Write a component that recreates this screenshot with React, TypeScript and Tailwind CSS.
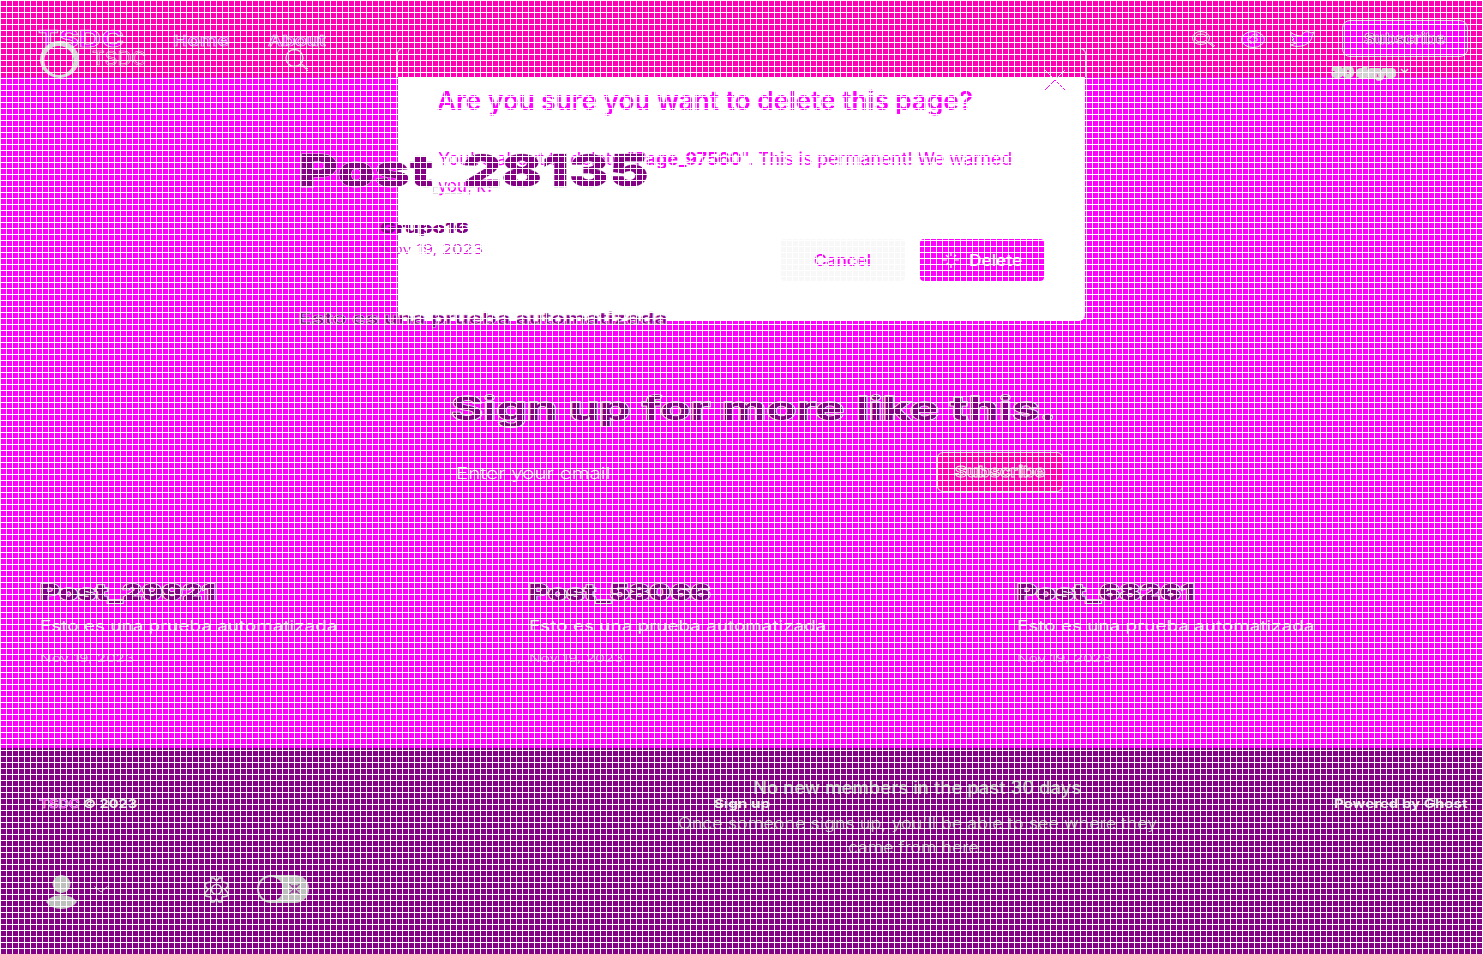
import React, { useLayoutEffect, useRef } from "react";
import { clsx } from "clsx";

/* Text stretched horizontally so that it fills the width of its box. */
function Fit({ className, children }: { className: string; children: React.ReactNode }) {
  const box = useRef<HTMLDivElement>(null);
  const text = useRef<HTMLSpanElement>(null);
  useLayoutEffect(() => {
    if (box.current && text.current) {
      text.current.style.transform = `scaleX(${box.current.clientWidth / text.current.offsetWidth})`;
    }
  }, []);
  return (
    <div ref={box} className={clsx("shrink-0 whitespace-nowrap text-left", className)}>
      <span ref={text} className="inline-block origin-left">{children}</span>
    </div>
  );
}

const outline = "[-webkit-text-stroke:0.7px_#dedede]";
const heavyOutline = "[-webkit-text-stroke:1.6px_#dedede] [paint-order:stroke_fill]";

const posts = [
  { title: "Post_29921", date: "Nov 19, 2023", width: "w-[176px]" },
  { title: "Post_58066", date: "Nov 19, 2023", width: "w-[181px]" },
  { title: "Post_68261", date: "Nov 19, 2023", width: "w-[177px]" },
];

function Modal() {
  return (
    <div className="[grid-area:1/1] pl-[397px] pt-[48px]">
      <div className="flex h-[273px] w-[689px] flex-col text-[#ff00ff]">
        <div className="h-[29px] rounded-t-md border border-b-0 border-[#dcdcdc]" />
        <div className="mx-px flex grow flex-col rounded-b-md bg-white">
          <div className="-mt-[28px] flex h-[72px] items-start pl-[39px] pt-[21px]">
            <Fit className="mt-[15px] h-8 w-[536px] text-[26px] font-semibold leading-8">
              Are you sure you want to delete this page?
            </Fit>
            <svg className="ml-[72px] h-5 w-5 shrink-0" viewBox="0 0 20 20" fill="none" strokeWidth="1">
              <path d="M0 0L9 9M20 0L11 9" stroke="#e0e0e0" />
              <path d="M0 20L10 10L20 20" stroke="#ff00ff" />
            </svg>
          </div>
          <div className="flex flex-col pl-[40px] pt-[25px] leading-[27px]">
            <Fit className="h-[27px] w-[574px] text-[17px]">
              You're about to delete "<b className="font-bold">Page_97560</b>". This is permanent! We warned
            </Fit>
            <Fit className="h-[27px] w-[56px] text-[17px]">you, k?</Fit>
          </div>
          <div className="ml-auto mr-[41px] mt-[39px] flex gap-[15px] text-[16px] font-medium">
            <button className="flex h-[42px] w-[124px] items-center justify-center rounded bg-[#f8f8f8]">
              <Fit className="mr-[2px] w-[57px]">Cancel</Fit>
            </button>
            <button className="flex h-[42px] w-[124px] items-center rounded bg-[#ff00ff] pl-[22px] text-white">
              <svg className="mr-[9px] h-[18px] w-[18px]" viewBox="0 0 18 18" stroke="white" strokeWidth="1.2">
                <path d="M9 1v4M9 13v4M1 9h4M13 9h4M4 4l2 2M12 12l2 2M14 4l-2 2M4 14l2-2" />
              </svg>
              <Fit className="w-[53px]">Delete</Fit>
            </button>
          </div>
        </div>
      </div>
    </div>
  );
}

function Page() {
  return (
    <div className="z-10 flex flex-col text-[#850085] [grid-area:1/1]">
      <header className="flex h-[78px] items-start pl-[38px]">
        <Fit className={clsx("mt-[27px] w-[86px] text-[23px] font-bold leading-[25px] text-[#ff00ff]", outline)}>TSDC</Fit>
        <Fit className={clsx("ml-[49px] mt-[30px] w-[57px] text-[15px] font-semibold leading-[21px] text-[#ff00ff]", outline)}>Home</Fit>
        <Fit className={clsx("ml-[38px] mt-[30px] w-[58px] text-[15px] font-semibold leading-[21px] text-[#ff00ff]", outline)}>About</Fit>
        <div className="ml-auto mr-[15px] mt-[20px] flex">
          <div className="flex h-[38px] items-center">
            <svg className="mr-[25px] h-[18px] w-[24px]" viewBox="0 0 24 18" fill="none" stroke="#dedede">
              <ellipse cx="9" cy="8" rx="8.500" ry="6.500" /><ellipse cx="9" cy="8" rx="6" ry="4" />
              <path d="M15 12l7 5M17 12l6 4" />
            </svg>
            <svg className="mr-[24px] h-[18px] w-[25px]" viewBox="0 0 25 18" fill="#ff00ff" stroke="#dedede">
              <ellipse cx="12" cy="9.500" rx="11.500" ry="8" />
              <path fill="none" d="M10 14V11H7V8h3C10 5 12 4 16 4v2c-3 0-3 1-3 2h3v3h-3v3" />
            </svg>
            <svg className="mr-[27px] h-[16px] w-[25px]" viewBox="0 0 25 16" fill="#ff00ff" stroke="#dedede">
              <path d="M1 1.500C4 4 8 5 12 5C12 1 18-.5 21 2L24 1L22 5C22 13 10 18 1 14L6 12L2 9L4 8L1 5Z" />
            </svg>
          </div>
          <button className="flex h-[37px] w-[126px] items-center justify-center rounded-lg border border-[#dedede] bg-[#ff00ff]">
            <Fit className={clsx("w-[82px] text-[15px] font-bold leading-5 text-[#b000b0]", outline)}>Subscribe</Fit>
          </button>
        </div>
      </header>

      <article className="h-[300px] pl-[299px] pt-[67px]">
        <Fit className="h-[50px] w-[350px] text-[46px] font-black leading-[50px] [-webkit-text-stroke:0.8px_#d8d0d8] [paint-order:stroke_fill]">
          Post<span className="text-[#ffffff00]">_</span>28135
        </Fit>
        <div className="ml-[81px] mt-[23px] flex flex-col">
          <Fit className="h-5 w-[89px] text-[14px] font-black leading-5">Grupo16</Fit>
          <Fit className="mt-px h-5 w-[103px] text-[13px] font-light leading-5 text-[#d400d4]">Nov 19, 2023</Fit>
        </div>
        <Fit className="-ml-px mt-[49px] h-5 w-[369px] text-[16px] font-bold leading-5 text-[#900090] [-webkit-text-stroke:0.5px_#d6c6d6]">
          Esto es una prueba automatizada
        </Fit>
      </article>

      <section className="h-[182px] pt-[11px]">
        <Fit className={clsx("ml-[451px] h-[40px] w-[605px] text-[32px] font-bold leading-[40px]", heavyOutline)}>
          Sign up for more like this.
        </Fit>
        <div className="ml-[456px] mt-[23px] flex h-[40px] items-center">
          <Fit className="mt-px w-[154px] text-[16px] font-light leading-5 text-[#ececec]">Enter your email</Fit>
          <button className="ml-[327px] flex h-[40px] w-[126px] items-center justify-center rounded-md border border-[#dedede] bg-[#ff00b4]">
            <Fit className="w-[91px] text-[15px] font-bold leading-5 text-[#ff00b4] [-webkit-text-stroke:0.9px_#dedede]">Subscribe</Fit>
          </button>
        </div>
      </section>

      <section className="flex h-[189px] pl-[40px] pt-[17px]">
        {posts.map((p) => (
          <div key={p.title} className="w-[488.500px] shrink-0">
            <Fit className={clsx("h-[30px] text-[22px] font-black leading-[30px]", heavyOutline, p.width)}>{p.title}</Fit>
            <Fit className="mt-[9px] h-5 w-[297px] text-[14px] leading-5 text-[#e6e6e6]">Esto es una prueba automatizada</Fit>
            <Fit className="mt-[12px] h-5 w-[95px] text-[10px] font-light leading-5 text-[#e2b9e2]">{p.date}</Fit>
          </div>
        ))}
      </section>

      <footer className="flex h-[205px] pl-[39px] pt-[45px] text-[12px] font-bold leading-5 text-[#e6e6e6]">
        <Fit className="w-[98px]">
          <span className="text-[#ff00ff] [-webkit-text-stroke:0.5px_#dedede]">TSDC</span> © 2023
        </Fit>
        <Fit className="ml-[577px] w-[56px]">Sign up</Fit>
        <Fit className="ml-[564px] w-[134px]">Powered by Ghost</Fit>
      </footer>
    </div>
  );
}

function Dashboard() {
  return (
    <div className="z-20 flex flex-col text-[#bdc0bd] [grid-area:1/1]">
      <div className="flex h-[778px] items-start pl-[40px] pt-[41px]">
        <svg className="h-[37px] w-[39px]" viewBox="0 0 39 37" fill="none">
          <path fill="#d4d4d4" fillRule="evenodd" d="M19.500 0A19.500 18.500 0 1 1 19.500 37A19.500 18.500 0 1 1 19.500 0ZM19 5A14.500 14.500 0 1 0 19 34A14.500 14.500 0 1 0 19 5Z" />
        </svg>
        <Fit className="ml-[13px] mt-[8px] w-[54px] text-[19px] leading-5 text-[#ff00b4] [-webkit-text-stroke:0.6px_#dedede]">TSDC</Fit>
        <svg className="ml-[139px] mt-[7px] h-[24px] w-[24px]" viewBox="0 0 24 24" fill="none" stroke="#dedede">
          <circle cx="9.500" cy="10" r="8.500" strokeWidth="1.3" /><path d="M15.500 16L23 23M17 16l6 5" />
        </svg>
        <Fit className="ml-[1023px] mt-[21px] h-5 w-[64px] text-[13px] font-extrabold leading-5 text-[#d2d2d2] [-webkit-text-stroke:2px_#d2d2d2]">30 days</Fit>
        <svg className="ml-[4px] mt-[27px] h-[6px] w-[9px]" viewBox="0 0 9 6" fill="none" stroke="#dedede" strokeWidth="1.5">
          <path d="M1 1l3.500 3.500L8 1" />
        </svg>
      </div>
      <div className="flex flex-col">
        <Fit className="ml-[753px] h-5 w-[328px] text-[18px] font-medium leading-5">No new members in the past 30 days</Fit>
        <Fit className="ml-[678px] mt-[15px] h-5 w-[479px] text-[16px] font-light leading-5">Once someone signs up, you'll be able to see where they</Fit>
        <Fit className="ml-[848px] mt-[4px] h-5 w-[136px] text-[16px] font-light leading-5">came from here.</Fit>
      </div>
      <div className="mt-[18px] flex h-[34px] items-start pl-[46px]">
        <svg className="h-[34px] w-[31px]" viewBox="0 0 31 34" fill="#bdc0bd">
          <circle cx="15.500" cy="9" r="9" />
          <path d="M0 27Q5 20 15.500 20Q26 20 31 27Q26 34 15.500 34Q5 34 0 27Z" />
        </svg>
        <svg className="ml-[17px] mt-[11px] h-[7px] w-[14px]" viewBox="0 0 14 7" fill="none" stroke="#bdc0bd">
          <path d="M.5 .5L7 6L13.500 .5" />
        </svg>
        <svg className="ml-[96px] mt-[2px] h-[26px] w-[25px]" viewBox="0 0 25 26" fill="none" stroke="#cdcdcd" strokeWidth="1.500">
          <circle cx="12.500" cy="12.500" r="5" />
          <path d="M7 1L10 1L12.500 4L15 1L18 1L18 5L23 6L24 9L21 12.500L24 16L23 19L18 20L18 25L15 25L12.500 22L10 25L7 25L7 20L2 19L1 16L4 12.500L1 9L2 6L7 5Z" />
        </svg>
        <div className="ml-[28px] flex h-7 w-[52px] items-center rounded-full bg-[#bdc0bd] pl-[2px]">
          <div className="h-6 w-6 rounded-full bg-[#840084]" />
          <svg className="ml-[5px] h-[10px] w-[13px]" viewBox="0 0 13 10" fill="none" stroke="#840084">
            <path d="M1.500 0L11.500 10M11.500 0L1.500 10M0 5h4M9 5h4M4 2h5M4 8h5" />
          </svg>
        </div>
      </div>
    </div>
  );
}

export default function App() {
  return (
    <main className="grid h-[954px] w-[1483px] grid-cols-[1483px] grid-rows-[954px] overflow-hidden bg-white font-['Inter','Liberation_Sans',sans-serif]">
      <div className="flex flex-col [grid-area:1/1]">
        <div className="h-[77px] bg-[#ff00b4]" />
        <div className="h-[671px] bg-[#ff00ff]" />
        <div className="grow border-t border-[#840084] bg-[#840084]" />
      </div>
      <Modal />
      <Page />
      <Dashboard />
      <div className="pointer-events-none z-30 bg-[linear-gradient(to_right,#fff_1px,transparent_1px),linear-gradient(to_bottom,#fff_1px,transparent_1px)] bg-[size:6px_6px] [grid-area:1/1]" />
    </main>
  );
}
